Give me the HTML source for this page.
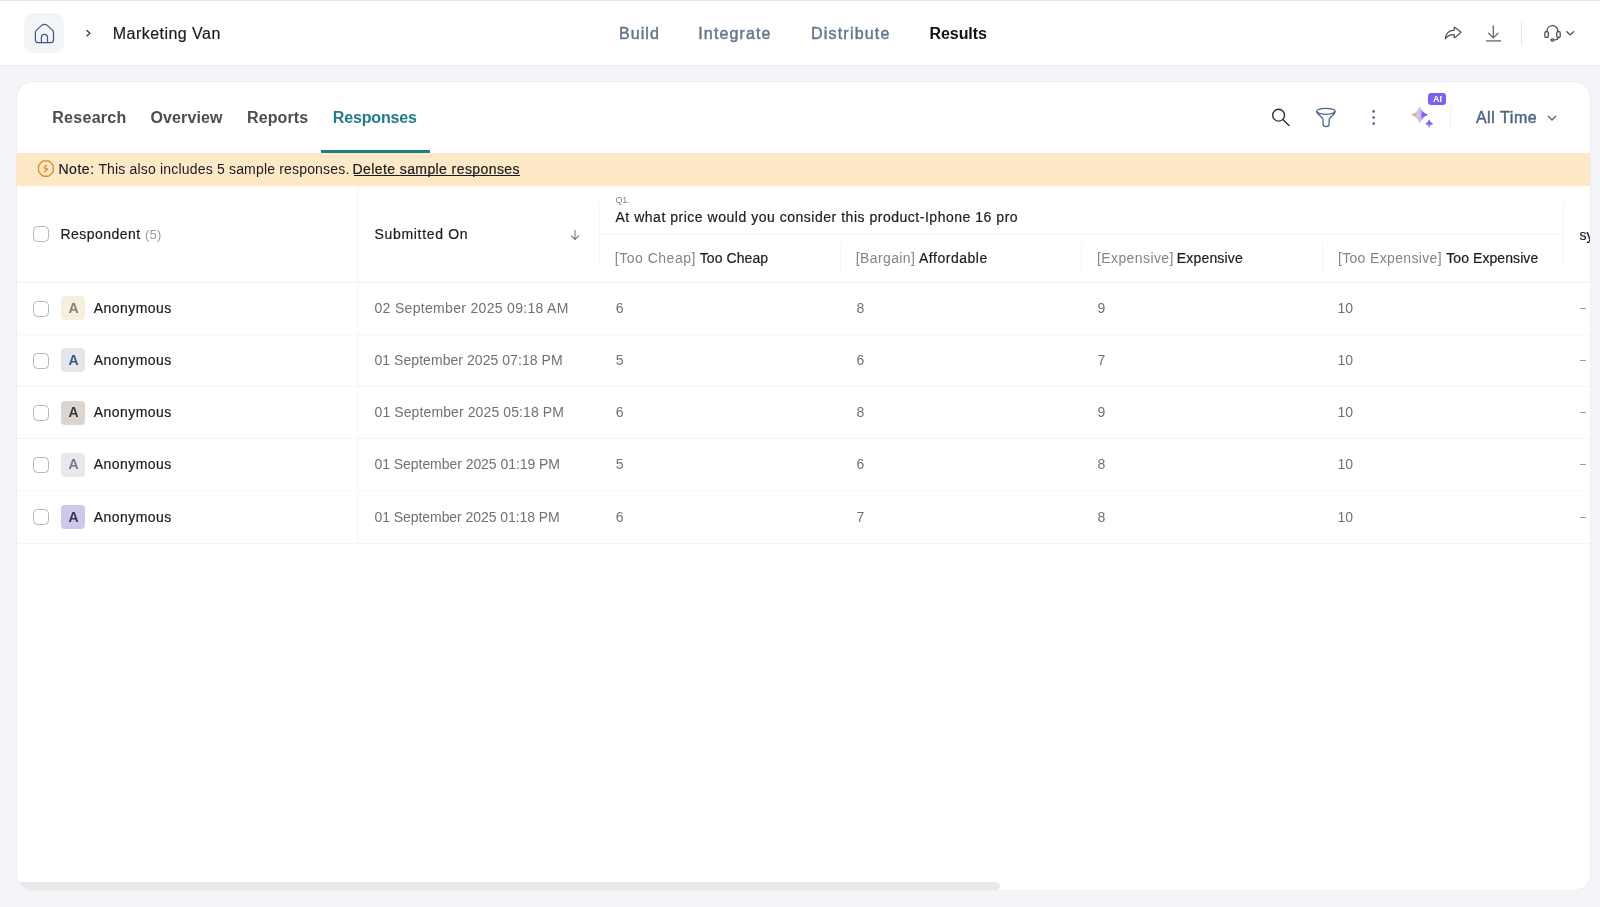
<!DOCTYPE html>
<html lang="en"><head><meta charset="utf-8"><title>Marketing Van - Responses</title>
<style>
html,body{margin:0;padding:0}
body{width:1600px;height:907px;overflow:hidden;background:#f3f5f9;font-family:"Liberation Sans",sans-serif;position:relative}
.t{position:absolute;line-height:1;white-space:pre;font-family:"Liberation Sans",sans-serif}
.b{position:absolute;box-sizing:border-box}
svg{position:absolute;overflow:visible}
.cb{position:absolute;box-sizing:border-box;width:16px;height:16px;border:1.4px solid #b7b7bb;border-radius:4.5px;background:#fff}
.av{position:absolute;width:24px;height:24px;border-radius:4px}
.hl{position:absolute;height:1px;background:#f1f0f1}
.vl{position:absolute;width:1px;background:#f5f3f4}
</style></head><body>

<div class="b" style="left:0;top:0;width:1600px;height:66px;background:#fff;border-bottom:1px solid #eceef0"></div>
<div class="b" style="left:0;top:0;width:1600px;height:1px;background:#e2e4e8"></div>
<div class="b" style="left:24px;top:13px;width:40px;height:40px;border-radius:9px;background:#f4f5f9"></div>
<svg style="left:34px;top:23px" width="21" height="21" viewBox="0 0 21 21" fill="none" stroke="#3f5b86" stroke-width="1.25" stroke-linejoin="round" stroke-linecap="round"><path d="M1.4 9.6 Q1.4 8 2.6 7.1 L7.6 2.4 Q8.8 1.3 10.45 1.3 Q12.1 1.3 13.3 2.4 L18.3 7.1 Q19.5 8 19.5 9.6 L19.5 17 Q19.5 19.5 17 19.5 L3.9 19.5 Q1.4 19.5 1.4 17 Z"/><path d="M7.4 19.5 L7.4 14.4 Q7.4 11.4 10.45 11.4 Q13.5 11.4 13.5 14.4 L13.5 19.5"/></svg>
<svg style="left:85px;top:29px" width="8" height="9" viewBox="0 0 8 9" fill="none" stroke="#333" stroke-width="1.3" stroke-linecap="round" stroke-linejoin="round"><path d="M1.9 1.5 L4.9 4.2 L1.9 6.9"/></svg>
<svg style="left:1444px;top:26px" width="18" height="14" viewBox="0 0 18 14" fill="none" stroke="#545454" stroke-width="1.25" stroke-linejoin="round" stroke-linecap="round"><path d="M10.2 1.7 Q10.2 0.7 11 1.4 L16.6 5.8 Q17.2 6.3 16.6 6.8 L11 11.4 Q10.2 12 10.2 11.1 L10.2 8.7 Q4.6 8.3 1.3 12.8 Q1.9 4.8 10.2 4.1 Z"/></svg>
<svg style="left:1485px;top:25px" width="17" height="17" viewBox="0 0 17 17" fill="none" stroke="#777" stroke-width="1.3" stroke-linecap="round" stroke-linejoin="round"><path d="M8.3 0.8 L8.3 12.7 M3.7 8.3 L8.3 12.9 L12.9 8.3" stroke="#666"/><path d="M1.6 15.9 L15.4 15.9" stroke-width="1.6" stroke="#8c8c8c"/></svg>
<div class="b" style="left:1521px;top:21px;width:1px;height:25px;background:#e9e9e9"></div>
<svg style="left:1543px;top:24px" width="19" height="19" viewBox="0 0 19 19" fill="none" stroke="#484848" stroke-width="1.25" stroke-linecap="round" stroke-linejoin="round"><path d="M3.9 7.5 C3.9 -0.2 15 -0.2 15 7.5"/><rect x="1.9" y="7.5" width="3.4" height="5.9" rx="1.25"/><rect x="13.8" y="7.5" width="3.4" height="5.9" rx="1.25"/><path d="M15.4 13.3 Q15.3 15.9 11 16"/><ellipse cx="9.45" cy="15.95" rx="1.5" ry="1.1"/></svg>
<svg style="left:1566px;top:31px" width="9" height="6" viewBox="0 0 9 6" fill="none" stroke="#444" stroke-width="1.3" stroke-linecap="round" stroke-linejoin="round"><path d="M0.9 0.8 L4.2 3.9 L7.5 0.8"/></svg>
<div class="b" style="left:16px;top:81px;width:1575px;height:810px;background:#fff;border:1px solid #eceef1;border-radius:17px;overflow:hidden"><div class="b" style="left:0;top:800px;width:983px;height:8px;border-radius:0 4px 4px 0;background:#e9e9e9"></div></div>
<div class="b" style="left:321px;top:150px;width:109px;height:3px;background:#1b7f8e"></div>
<svg style="left:1270px;top:107px" width="21" height="21" viewBox="0 0 21 21" fill="none" stroke="#2e3038" stroke-width="1.4" stroke-linecap="round"><circle cx="8.6" cy="8.2" r="5.9"/><path d="M12.9 12.6 L19 18.6"/></svg>
<svg style="left:1315px;top:107px" width="22" height="21" viewBox="0 0 22 21" fill="none" stroke="#48638a" stroke-width="1.25" stroke-linecap="round" stroke-linejoin="round"><ellipse cx="10.9" cy="4.3" rx="9.2" ry="2.95"/><path d="M1.7 4.6 Q2 6.2 4 7.9 L7 10.7 Q8.05 11.7 8.05 13.1 L8.05 17.2 Q8.05 19.6 11.07 19.6 Q14.1 19.6 14.1 17.2 L14.1 13.1 Q14.1 11.7 15.15 10.7 L18.1 7.9 Q20.1 6.2 20.1 4.6"/></svg>
<svg style="left:1368px;top:107px" width="12" height="21" viewBox="0 0 12 21" fill="#46628a"><circle cx="5.7" cy="4.4" r="1.3"/><circle cx="5.7" cy="10.5" r="1.3"/><circle cx="5.7" cy="16.6" r="1.3"/></svg>
<svg style="left:1410px;top:105px" width="25" height="25" viewBox="0 0 25 25"><defs><linearGradient id="sg" x1="0" y1="0" x2="1" y2="0"><stop offset="0" stop-color="#f2a02e"/><stop offset="0.22" stop-color="#d9b38a"/><stop offset="0.36" stop-color="#cdc6ee"/><stop offset="0.56" stop-color="#c3baf3"/><stop offset="0.66" stop-color="#7e66f1"/><stop offset="1" stop-color="#6a4ff0"/></linearGradient><linearGradient id="sg2" x1="0" y1="0" x2="0" y2="1"><stop offset="0" stop-color="#6a4ff0"/><stop offset="0.45" stop-color="#7e66f1"/><stop offset="1" stop-color="#cfc8f2"/></linearGradient></defs><path d="M9.7 1.2 Q11.9 7.5 18.2 9.7 Q11.9 11.9 9.7 18.2 Q7.5 11.9 1.2 9.7 Q7.5 7.5 9.7 1.2 Z" fill="url(#sg)"/><path d="M19.2 14.4 Q20.2 17.8 23.3 18.8 Q20.2 19.8 19.2 23.2 Q18.2 19.8 15.1 18.8 Q18.2 17.8 19.2 14.4 Z" fill="url(#sg2)"/></svg>
<div class="b" style="left:1428px;top:93px;width:18px;height:12px;border-radius:3px;background:#7a60f5"></div>
<div class="b" style="left:1450px;top:106px;width:1px;height:24px;background:#eef0f3"></div>
<svg style="left:1547px;top:114.5px" width="10" height="7" viewBox="0 0 10 7" fill="none" stroke="#4d6683" stroke-width="1.4" stroke-linecap="round" stroke-linejoin="round"><path d="M1.3 1.2 L5 4.9 L8.7 1.2"/></svg>
<div class="b" style="left:16px;top:153px;width:1574px;height:33px;background:#fde8c8"></div>
<svg style="left:37px;top:160px" width="18" height="18" viewBox="0 0 18 18" fill="none" stroke="#e0912a" stroke-width="1.5" stroke-linejoin="round" stroke-linecap="round"><path d="M5.25 1.57 Q5.86 0.95 6.71 0.95 L11.09 0.95 Q11.94 0.95 12.55 1.57 L15.65 4.78 Q16.25 5.40 16.25 6.28 L16.25 10.82 Q16.25 11.70 15.65 12.32 L12.55 15.53 Q11.94 16.15 11.09 16.15 L6.71 16.15 Q5.86 16.15 5.25 15.53 L2.15 12.32 Q1.55 11.70 1.55 10.82 L1.55 6.28 Q1.55 5.40 2.15 4.78 Z"/><path d="M9.30 5.25 L7.20 7.85 L10.50 9.15 L7.60 11.75" stroke-width="1.6"/></svg>
<div class="b" style="left:353.5px;top:175.4px;width:166px;height:1px;background:#1c1c1c"></div>
<div class="hl" style="left:17px;top:282px;width:1573px;height:1px;background:#f1f0f1"></div>
<div class="hl" style="left:17px;top:334px;width:1573px;height:1px;background:#f8f8f9"></div>
<div class="hl" style="left:17px;top:335px;width:1573px;height:1px;background:#fcfcfc"></div>
<div class="hl" style="left:17px;top:386px;width:1573px;height:1px;background:#f3f4f8"></div>
<div class="hl" style="left:17px;top:438px;width:1573px;height:1px;background:#f3f4f8"></div>
<div class="hl" style="left:17px;top:490px;width:1573px;height:2px;background:#fbfbfb"></div>
<div class="hl" style="left:17px;top:543px;width:1573px;height:1px;background:#f5f4f6"></div>
<div class="vl" style="left:357px;top:186px;width:2px;height:357px;background:#f9f9f9"></div>
<div class="vl" style="left:599px;top:203px;height:62px"></div>
<div class="vl" style="left:1563px;top:203px;height:62px"></div>
<div class="hl" style="left:600px;top:233px;width:963px;height:2px;background:#f8f8f8"></div>
<div class="vl" style="left:840px;top:243px;height:31px"></div>
<div class="vl" style="left:1081px;top:243px;height:31px"></div>
<div class="vl" style="left:1322px;top:243px;height:31px"></div>
<svg style="left:570px;top:229px" width="10" height="12" viewBox="0 0 10 12" fill="none" stroke="#7b7b7b" stroke-width="1.1" stroke-linecap="round" stroke-linejoin="round"><path d="M5 1.2 L5 10.4 M1.4 6.9 L5 10.5 L8.6 6.9"/></svg>
<div class="cb" style="left:33px;top:226px"></div>
<div class="cb" style="left:33px;top:301px"></div>
<div class="b" style="left:1580px;top:308px;width:6px;height:1px;background:#9c9c9c"></div>
<div class="av" style="left:61px;top:296px;background:#f8eedd"></div>
<div class="cb" style="left:33px;top:353px"></div>
<div class="b" style="left:1580px;top:360px;width:6px;height:1px;background:#9c9c9c"></div>
<div class="av" style="left:61px;top:348px;background:#e4e6eb"></div>
<div class="cb" style="left:33px;top:405px"></div>
<div class="b" style="left:1580px;top:412px;width:6px;height:1px;background:#9c9c9c"></div>
<div class="av" style="left:61px;top:401px;background:#dcd5cf"></div>
<div class="cb" style="left:33px;top:457px"></div>
<div class="b" style="left:1580px;top:464px;width:6px;height:1px;background:#9c9c9c"></div>
<div class="av" style="left:61px;top:453px;background:#e7e8ed"></div>
<div class="cb" style="left:33px;top:509px"></div>
<div class="b" style="left:1580px;top:517px;width:6px;height:1px;background:#9c9c9c"></div>
<div class="av" style="left:61px;top:505px;background:#cfc7ec"></div>
<div id="txt" style="position:absolute;left:0;top:0;width:1600px;height:907px;will-change:transform">
<span class="t" style="left:112.80px;top:26.00px;font-size:16px;font-weight:400;color:#1c1c1c;letter-spacing:0.460px;-webkit-text-stroke:0.2px #1c1c1c">Marketing Van</span>
<span class="t" style="left:619.00px;top:26.00px;font-size:16px;font-weight:400;color:#62768f;letter-spacing:1.080px;-webkit-text-stroke:0.45px #62768f">Build</span>
<span class="t" style="left:698.30px;top:26.00px;font-size:16px;font-weight:400;color:#62768f;letter-spacing:1.118px;-webkit-text-stroke:0.45px #62768f">Integrate</span>
<span class="t" style="left:811.00px;top:26.00px;font-size:16px;font-weight:400;color:#62768f;letter-spacing:1.202px;-webkit-text-stroke:0.45px #62768f">Distribute</span>
<span class="t" style="left:929.50px;top:26.00px;font-size:16px;font-weight:700;color:#111111;letter-spacing:-0.066px;">Results</span>
<span class="t" style="left:52.25px;top:110.00px;font-size:16px;font-weight:700;color:#4d4d4d;letter-spacing:0.282px;">Research</span>
<span class="t" style="left:150.50px;top:110.00px;font-size:16px;font-weight:700;color:#4d4d4d;letter-spacing:0.113px;">Overview</span>
<span class="t" style="left:247.00px;top:110.00px;font-size:16px;font-weight:700;color:#4d4d4d;letter-spacing:0.116px;">Reports</span>
<span class="t" style="left:332.75px;top:110.00px;font-size:16px;font-weight:700;color:#1f7c8b;letter-spacing:-0.152px;">Responses</span>
<span class="t" style="left:1475.90px;top:110.00px;font-size:16px;font-weight:400;color:#4d6683;letter-spacing:0.559px;-webkit-text-stroke:0.45px #4d6683">All Time</span>
<span class="t" style="left:1432.90px;top:95.00px;font-size:9px;font-weight:700;color:#ffffff;letter-spacing:0.000px;">AI</span>
<span class="t" style="left:58.40px;top:162.00px;font-size:14px;font-weight:400;color:#1c1c1c;letter-spacing:0.557px;-webkit-text-stroke:0.22px #1c1c1c">Note:</span>
<span class="t" style="left:98.40px;top:162.00px;font-size:14px;font-weight:400;color:#1c1c1c;letter-spacing:0.177px;">This also includes 5 sample responses.</span>
<span class="t" style="left:352.50px;top:162.00px;font-size:14px;font-weight:400;color:#1c1c1c;letter-spacing:0.410px;-webkit-text-stroke:0.22px #1c1c1c">Delete sample responses</span>
<span class="t" style="left:60.50px;top:227.00px;font-size:14px;font-weight:400;color:#1c1c1c;letter-spacing:0.460px;-webkit-text-stroke:0.2px #1c1c1c">Respondent</span>
<span class="t" style="left:145.10px;top:228.00px;font-size:13px;font-weight:400;color:#9b9b9b;letter-spacing:0.120px;">(5)</span>
<span class="t" style="left:374.50px;top:227.00px;font-size:14px;font-weight:400;color:#1c1c1c;letter-spacing:0.676px;-webkit-text-stroke:0.2px #1c1c1c">Submitted On</span>
<span class="t" style="left:615.50px;top:196.00px;font-size:9px;font-weight:400;color:#858585;letter-spacing:-0.303px;">Q1.</span>
<span class="t" style="left:615.50px;top:210.00px;font-size:14px;font-weight:400;color:#1c1c1c;letter-spacing:0.519px;-webkit-text-stroke:0.2px #1c1c1c">At what price would you consider this product-Iphone 16 pro</span>
<span class="t" style="left:614.80px;top:251.00px;font-size:14px;font-weight:400;color:#858585;letter-spacing:0.509px;">[Too Cheap]</span>
<span class="t" style="left:699.80px;top:251.00px;font-size:14px;font-weight:400;color:#1c1c1c;letter-spacing:0.071px;-webkit-text-stroke:0.2px #1c1c1c">Too Cheap</span>
<span class="t" style="left:855.80px;top:251.00px;font-size:14px;font-weight:400;color:#858585;letter-spacing:0.382px;">[Bargain]</span>
<span class="t" style="left:919.00px;top:251.00px;font-size:14px;font-weight:400;color:#1c1c1c;letter-spacing:0.524px;-webkit-text-stroke:0.2px #1c1c1c">Affordable</span>
<span class="t" style="left:1097.00px;top:251.00px;font-size:14px;font-weight:400;color:#858585;letter-spacing:0.402px;">[Expensive]</span>
<span class="t" style="left:1176.80px;top:251.00px;font-size:14px;font-weight:400;color:#1c1c1c;letter-spacing:0.174px;-webkit-text-stroke:0.2px #1c1c1c">Expensive</span>
<span class="t" style="left:1337.90px;top:251.00px;font-size:14px;font-weight:400;color:#858585;letter-spacing:0.347px;">[Too Expensive]</span>
<span class="t" style="left:1446.20px;top:251.00px;font-size:14px;font-weight:400;color:#1c1c1c;letter-spacing:0.078px;-webkit-text-stroke:0.2px #1c1c1c">Too Expensive</span>
<span class="t" style="left:1579.50px;top:228.00px;font-size:14px;font-weight:400;color:#1c1c1c;letter-spacing:0.000px;-webkit-text-stroke:0.2px #1c1c1c">sy</span>
<span class="t" style="left:93.80px;top:301.00px;font-size:14px;font-weight:400;color:#1c1c1c;letter-spacing:0.446px;-webkit-text-stroke:0.2px #1c1c1c">Anonymous</span>
<span class="t" style="left:68.40px;top:301.00px;font-size:14px;font-weight:700;color:#7e7e7e;letter-spacing:0.000px;">A</span>
<span class="t" style="left:374.50px;top:301.00px;font-size:14px;font-weight:400;color:#717171;letter-spacing:0.315px;">02 September 2025 09:18 AM</span>
<span class="t" style="left:615.70px;top:301.00px;font-size:14px;font-weight:400;color:#717171;letter-spacing:0.000px;">6</span>
<span class="t" style="left:856.50px;top:301.00px;font-size:14px;font-weight:400;color:#717171;letter-spacing:0.000px;">8</span>
<span class="t" style="left:1097.50px;top:301.00px;font-size:14px;font-weight:400;color:#717171;letter-spacing:0.000px;">9</span>
<span class="t" style="left:1337.50px;top:301.00px;font-size:14px;font-weight:400;color:#717171;letter-spacing:0.000px;">10</span>
<span class="t" style="left:93.80px;top:353.00px;font-size:14px;font-weight:400;color:#1c1c1c;letter-spacing:0.446px;-webkit-text-stroke:0.2px #1c1c1c">Anonymous</span>
<span class="t" style="left:68.40px;top:353.00px;font-size:14px;font-weight:700;color:#3f5a78;letter-spacing:0.000px;">A</span>
<span class="t" style="left:374.50px;top:353.00px;font-size:14px;font-weight:400;color:#717171;letter-spacing:0.051px;">01 September 2025 07:18 PM</span>
<span class="t" style="left:615.70px;top:353.00px;font-size:14px;font-weight:400;color:#717171;letter-spacing:0.000px;">5</span>
<span class="t" style="left:856.50px;top:353.00px;font-size:14px;font-weight:400;color:#717171;letter-spacing:0.000px;">6</span>
<span class="t" style="left:1097.50px;top:353.00px;font-size:14px;font-weight:400;color:#717171;letter-spacing:0.000px;">7</span>
<span class="t" style="left:1337.50px;top:353.00px;font-size:14px;font-weight:400;color:#717171;letter-spacing:0.000px;">10</span>
<span class="t" style="left:93.80px;top:405.00px;font-size:14px;font-weight:400;color:#1c1c1c;letter-spacing:0.446px;-webkit-text-stroke:0.2px #1c1c1c">Anonymous</span>
<span class="t" style="left:68.40px;top:405.00px;font-size:14px;font-weight:700;color:#3a3a3a;letter-spacing:0.000px;">A</span>
<span class="t" style="left:374.50px;top:405.00px;font-size:14px;font-weight:400;color:#717171;letter-spacing:0.107px;">01 September 2025 05:18 PM</span>
<span class="t" style="left:615.70px;top:405.00px;font-size:14px;font-weight:400;color:#717171;letter-spacing:0.000px;">6</span>
<span class="t" style="left:856.50px;top:405.00px;font-size:14px;font-weight:400;color:#717171;letter-spacing:0.000px;">8</span>
<span class="t" style="left:1097.50px;top:405.00px;font-size:14px;font-weight:400;color:#717171;letter-spacing:0.000px;">9</span>
<span class="t" style="left:1337.50px;top:405.00px;font-size:14px;font-weight:400;color:#717171;letter-spacing:0.000px;">10</span>
<span class="t" style="left:93.80px;top:457.00px;font-size:14px;font-weight:400;color:#1c1c1c;letter-spacing:0.446px;-webkit-text-stroke:0.2px #1c1c1c">Anonymous</span>
<span class="t" style="left:68.40px;top:457.00px;font-size:14px;font-weight:700;color:#777788;letter-spacing:0.000px;">A</span>
<span class="t" style="left:374.50px;top:457.00px;font-size:14px;font-weight:400;color:#717171;letter-spacing:-0.053px;">01 September 2025 01:19 PM</span>
<span class="t" style="left:615.70px;top:457.00px;font-size:14px;font-weight:400;color:#717171;letter-spacing:0.000px;">5</span>
<span class="t" style="left:856.50px;top:457.00px;font-size:14px;font-weight:400;color:#717171;letter-spacing:0.000px;">6</span>
<span class="t" style="left:1097.50px;top:457.00px;font-size:14px;font-weight:400;color:#717171;letter-spacing:0.000px;">8</span>
<span class="t" style="left:1337.50px;top:457.00px;font-size:14px;font-weight:400;color:#717171;letter-spacing:0.000px;">10</span>
<span class="t" style="left:93.80px;top:510.00px;font-size:14px;font-weight:400;color:#1c1c1c;letter-spacing:0.446px;-webkit-text-stroke:0.2px #1c1c1c">Anonymous</span>
<span class="t" style="left:68.40px;top:510.00px;font-size:14px;font-weight:700;color:#2f3a4d;letter-spacing:0.000px;">A</span>
<span class="t" style="left:374.50px;top:510.00px;font-size:14px;font-weight:400;color:#717171;letter-spacing:-0.065px;">01 September 2025 01:18 PM</span>
<span class="t" style="left:615.70px;top:510.00px;font-size:14px;font-weight:400;color:#717171;letter-spacing:0.000px;">6</span>
<span class="t" style="left:856.50px;top:510.00px;font-size:14px;font-weight:400;color:#717171;letter-spacing:0.000px;">7</span>
<span class="t" style="left:1097.50px;top:510.00px;font-size:14px;font-weight:400;color:#717171;letter-spacing:0.000px;">8</span>
<span class="t" style="left:1337.50px;top:510.00px;font-size:14px;font-weight:400;color:#717171;letter-spacing:0.000px;">10</span>
</div>
<div class="b" style="left:1590px;top:186px;width:10px;height:400px;background:#f3f5f9;border-left:1px solid #eceef1"></div>

</body></html>
